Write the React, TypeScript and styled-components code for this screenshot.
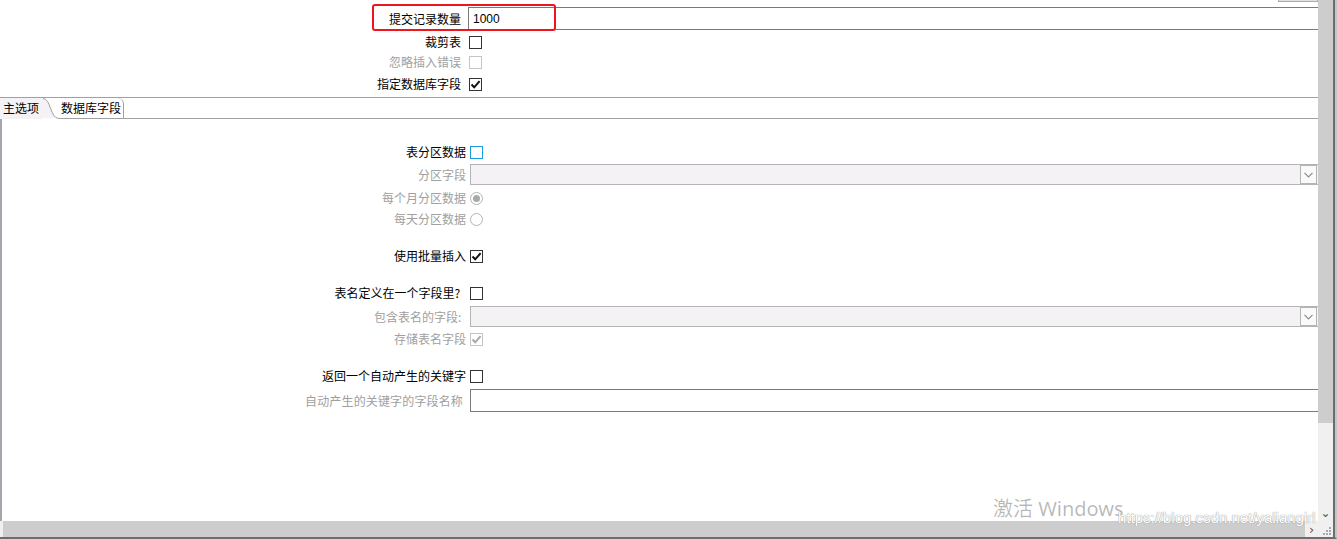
import styled, { createGlobalStyle } from 'styled-components'

const GlobalStyle = createGlobalStyle`
  html, body {
    margin: 0;
    padding: 0;
    background: #fff;
    overflow: hidden;
  }
  body {
    font-family: "Noto Sans CJK SC", "Microsoft YaHei", sans-serif;
  }
`

const colors = {
  text: '#000000',
  muted: '#a0a0a0',
  inputBorder: '#7a7a7a',
  comboBorder: '#b4b4b4',
  comboBg: '#f5f2f5',
  tabLine: '#a0a0a0',
  scrollThumb: '#cdcdcd',
  scrollTrack: '#f0f0f0',
  frame: '#6d6d6d',
  focus: '#1e9be0',
  red: '#f0141c',
}

type CheckState = 'normal' | 'disabled' | 'focus'

function CheckMark({ color }: { color: string }) {
  return (
    <svg width="11" height="11" viewBox="0 0 11 11">
      <path d="M1.5 5.5 L4.2 8.3 L9.6 2.2" fill="none" stroke={color} strokeWidth="2" />
    </svg>
  )
}

function Check({ state = 'normal', checked = false }: { state?: CheckState; checked?: boolean }) {
  return (
    <CheckBox $state={state}>
      {checked && <CheckMark color={state === 'disabled' ? '#a8a8a8' : '#111'} />}
    </CheckBox>
  )
}

function Chevron() {
  return (
    <svg width="9" height="6" viewBox="0 0 9 6">
      <path d="M0.5 0.8 L4.5 4.8 L8.5 0.8" fill="none" stroke="#8a8a8a" strokeWidth="1.2" />
    </svg>
  )
}

function Combo() {
  return (
    <ComboField>
      <DropButton>
        <Chevron />
      </DropButton>
    </ComboField>
  )
}

export default function App() {
  return (
    <Window>
      <GlobalStyle />
      <Content>
        <ButtonStrip>
          <MiniButton />
        </ButtonStrip>

        <TopRow $h={23} $mt={5}>
          <Label>提交记录数量</Label>
          <TextField defaultValue="1000" />
          <Highlight />
        </TopRow>
        <TopRow $h={20} $mt={2}>
          <Label>裁剪表</Label>
          <Cell $indent={1}>
            <Check />
          </Cell>
        </TopRow>
        <TopRow $h={20}>
          <Label $disabled>忽略插入错误</Label>
          <Cell $indent={1}>
            <Check state="disabled" />
          </Cell>
        </TopRow>
        <TopRow $h={20} $mt={2}>
          <Label>指定数据库字段</Label>
          <Cell $indent={1}>
            <Check checked />
          </Cell>
        </TopRow>

        <TabBar>
          <ActiveTab>主选项</ActiveTab>
          <TabCurve width="18" height="21" viewBox="0 0 18 21">
            <path d="M0 0 L1 0 C9 0, 8 20, 17 20 L0 20 Z" fill={colors.comboBg} />
            <path d="M1 0.5 C9 0.5, 8 20.5, 17 20.5 L18 20.5" fill="none" stroke={colors.tabLine} />
          </TabCurve>
          <Tab>数据库字段</Tab>
          <TabFiller />
        </TabBar>

        <Panel>
          <PanelRow $h={20} $mt={23}>
            <Label>表分区数据</Label>
            <Cell>
              <Check state="focus" />
            </Cell>
          </PanelRow>
          <PanelRow $h={21} $mt={2}>
            <Label $disabled>分区字段</Label>
            <Combo />
          </PanelRow>
          <PanelRow $h={20} $mt={3}>
            <Label $disabled>每个月分区数据</Label>
            <Cell>
              <Radio $on />
            </Cell>
          </PanelRow>
          <PanelRow $h={20} $mt={1}>
            <Label $disabled>每天分区数据</Label>
            <Cell>
              <Radio />
            </Cell>
          </PanelRow>

          <PanelRow $h={20} $mt={17}>
            <Label>使用批量插入</Label>
            <Cell>
              <Check checked />
            </Cell>
          </PanelRow>

          <PanelRow $h={20} $mt={17}>
            <Label $pad={3}>表名定义在一个字段里?&nbsp;</Label>
            <Cell>
              <Check />
            </Cell>
          </PanelRow>
          <PanelRow $h={21} $mt={3}>
            <Label $disabled $pad={2}>包含表名的字段:&nbsp;</Label>
            <Combo />
          </PanelRow>
          <PanelRow $h={20} $mt={2}>
            <Label $disabled>存储表名字段</Label>
            <Cell>
              <Check state="disabled" checked />
            </Cell>
          </PanelRow>

          <PanelRow $h={20} $mt={17}>
            <Label>返回一个自动产生的关键字</Label>
            <Cell>
              <Check />
            </Cell>
          </PanelRow>
          <PanelRow $h={23} $mt={3}>
            <Label $disabled $pad={3} $spacing={0.15}>自动产生的关键字的字段名称</Label>
            <TextField defaultValue="" />
          </PanelRow>
        </Panel>
      </Content>

      <VScroll>
        <VThumb />
        <VTrack>
          <ArrowGlyph>⌄</ArrowGlyph>
        </VTrack>
      </VScroll>

      <HScroll>
        <HThumb />
        <HArrow>›</HArrow>
      </HScroll>
      <Corner>
        <svg width="9" height="9" viewBox="0 0 9 9">
          <g fill="#a9a9a9">
            <rect x="6" y="0" width="2" height="2" />
            <rect x="3" y="3" width="2" height="2" />
            <rect x="6" y="3" width="2" height="2" />
            <rect x="0" y="6" width="2" height="2" />
            <rect x="3" y="6" width="2" height="2" />
            <rect x="6" y="6" width="2" height="2" />
          </g>
        </svg>
      </Corner>

      <Activate>激活 Windows</Activate>
      <SourceMark>https://blog.csdn.net/yaliangirl</SourceMark>
    </Window>
  )
}

const Window = styled.div`
  position: relative;
  width: 1337px;
  height: 539px;
  box-sizing: border-box;
  display: grid;
  grid-template-columns: 1318px 17px;
  grid-template-rows: 521px 16px;
  border-right: 2px solid #c4c4c4;
  border-bottom: 2px solid ${colors.frame};
  overflow: hidden;
  background: #fff;
`

const Content = styled.div`
  display: flex;
  flex-direction: column;
  overflow: hidden;
  min-width: 0;
`

const ButtonStrip = styled.div`
  height: 2px;
  display: flex;
  justify-content: flex-end;
`

const MiniButton = styled.div`
  width: 40px;
  height: 2px;
  box-sizing: border-box;
  background: #e1e1e1;
  border: 1px solid #adadad;
  border-top: none;
`

const Row = styled.div<{ $h: number; $mt?: number }>`
  position: relative;
  display: grid;
  align-items: center;
  height: ${(p) => p.$h}px;
  margin-top: ${(p) => p.$mt ?? 0}px;
  flex-shrink: 0;
`

const TopRow = styled(Row)`
  grid-template-columns: 461px 1fr;
  column-gap: 7px;
`

const PanelRow = styled(Row)`
  grid-template-columns: 464px 1fr;
  column-gap: 4px;
`

const Label = styled.span<{ $disabled?: boolean; $pad?: number; $spacing?: number }>`
  text-align: right;
  font-size: 12px;
  line-height: 16px;
  white-space: nowrap;
  padding-right: ${(p) => p.$pad ?? 0}px;
  letter-spacing: ${(p) => p.$spacing ?? 0}px;
  color: ${(p) => (p.$disabled ? colors.muted : colors.text)};
`

const Cell = styled.div<{ $indent?: number }>`
  display: flex;
  align-items: center;
  padding-left: ${(p) => p.$indent ?? 0}px;
`

const CheckBox = styled.span<{ $state: CheckState }>`
  width: 13px;
  height: 13px;
  box-sizing: border-box;
  display: flex;
  align-items: center;
  justify-content: center;
  background: #fff;
  border: 1px solid
    ${(p) => (p.$state === 'disabled' ? '#c4c4c4' : p.$state === 'focus' ? colors.focus : '#333')};
`

const Radio = styled.span<{ $on?: boolean }>`
  width: 13px;
  height: 13px;
  box-sizing: border-box;
  border-radius: 50%;
  border: 1px solid #b4b4b4;
  display: flex;
  align-items: center;
  justify-content: center;

  &::after {
    content: '';
    display: ${(p) => (p.$on ? 'block' : 'none')};
    width: 7px;
    height: 7px;
    border-radius: 50%;
    background: #a8a8a8;
  }
`

const TextField = styled.input`
  height: 23px;
  box-sizing: border-box;
  border: 1px solid ${colors.inputBorder};
  border-right: none;
  padding: 0 4px;
  margin: 0;
  font-family: "Liberation Sans", Arial, sans-serif;
  font-size: 12px;
  color: ${colors.text};
  background: #fff;
  outline: none;
  width: 100%;
`

const ComboField = styled.div`
  height: 21px;
  box-sizing: border-box;
  border: 1px solid ${colors.comboBorder};
  border-right: none;
  background: ${colors.comboBg};
  display: flex;
  justify-content: flex-end;
  align-items: center;
  padding-right: 1px;
`

const DropButton = styled.div`
  width: 17px;
  height: 19px;
  box-sizing: border-box;
  border: 1px solid ${colors.comboBorder};
  background: #fbfafb;
  display: flex;
  align-items: center;
  justify-content: center;
`

const Highlight = styled.div`
  position: absolute;
  left: 372px;
  top: -3px;
  width: 184px;
  height: 27px;
  box-sizing: border-box;
  border: 2px solid ${colors.red};
  border-radius: 3px;
  pointer-events: none;
`

const TabBar = styled.div`
  display: flex;
  height: 22px;
  margin-top: 3px;
  box-sizing: border-box;
  border-top: 1px solid ${colors.tabLine};
  flex-shrink: 0;
`

const ActiveTab = styled.div`
  width: 42px;
  box-sizing: border-box;
  padding-left: 3px;
  background: ${colors.comboBg};
  font-size: 12px;
  line-height: 20px;
  color: ${colors.text};
  white-space: nowrap;
`

const TabCurve = styled.svg`
  display: block;
  flex-shrink: 0;
`

const Tab = styled.div`
  width: 64px;
  box-sizing: border-box;
  padding-left: 1px;
  font-size: 12px;
  line-height: 20px;
  color: ${colors.text};
  white-space: nowrap;
  border-right: 1px solid ${colors.tabLine};
  border-bottom: 1px solid ${colors.tabLine};
  border-top-right-radius: 6px;
`

const TabFiller = styled.div`
  flex: 1;
  border-bottom: 1px solid ${colors.tabLine};
`

const Panel = styled.div`
  flex: 1;
  display: flex;
  flex-direction: column;
  border-left: 2px solid #a8a4ae;
`

const VScroll = styled.div`
  display: flex;
  flex-direction: column;
  border-right: 2px solid ${colors.frame};
`

const VThumb = styled.div`
  height: 423px;
  background: ${colors.scrollThumb};
`

const VTrack = styled.div`
  flex: 1;
  background: ${colors.scrollTrack};
  display: flex;
  align-items: flex-end;
  justify-content: center;
`

const ArrowGlyph = styled.span`
  font-family: "DejaVu Sans", sans-serif;
  font-size: 12px;
  line-height: 12px;
  color: #555;
  margin-bottom: 2px;
`

const HScroll = styled.div`
  display: flex;
  align-items: stretch;
  background: ${colors.scrollTrack};
  padding-left: 3px;
`

const HThumb = styled.div`
  width: 1302px;
  background: ${colors.scrollThumb};
`

const HArrow = styled.span`
  flex: 1;
  display: flex;
  align-items: center;
  justify-content: center;
  font-family: "DejaVu Sans", sans-serif;
  font-size: 13px;
  color: #555;
`

const Corner = styled.div`
  background: ${colors.scrollTrack};
  border-right: 2px solid ${colors.frame};
  display: flex;
  align-items: flex-end;
  justify-content: flex-end;
  padding: 0 1px 1px 0;
`

const Activate = styled.div`
  position: absolute;
  left: 993px;
  top: 496px;
  font-family: "Noto Sans", "Noto Sans CJK SC", sans-serif;
  font-size: 20px;
  line-height: 26px;
  color: rgba(0, 0, 0, 0.28);
  white-space: nowrap;
  pointer-events: none;
`

const SourceMark = styled.div`
  position: absolute;
  left: 1118px;
  top: 509px;
  font-family: "Liberation Sans", Arial, sans-serif;
  font-size: 15px;
  line-height: 17px;
  color: #fff;
  text-shadow: 0 0 1px #9a9a9a, 0 0 1px #9a9a9a;
  white-space: nowrap;
  pointer-events: none;
`
